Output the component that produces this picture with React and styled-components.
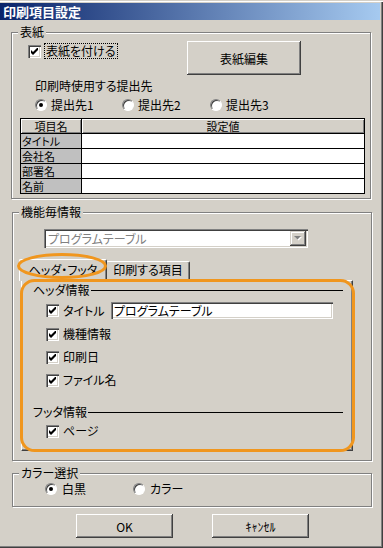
import React from "react";
import styled, { createGlobalStyle } from "styled-components";

const face = "#D4D0C8";

const GlobalStyle = createGlobalStyle`
  html, body { margin: 0; padding: 0; background: ${face}; }
  body {
    font-family: "Noto Sans CJK JP", "Noto Sans", sans-serif;
    font-size: 12px;
    color: #000;
    font-feature-settings: "palt";
  }
  * { box-sizing: border-box; }
`;

const Window = styled.div`
  position: relative;
  width: 383px;
  height: 548px;
  background: ${face};
  padding: 3px 3px 0 0;
  display: flex;
  flex-direction: column;
  box-shadow: inset 0 1px ${face}, inset 0 2px #fff, inset -1px -1px #404040, inset -2px -2px #808080;
`;

const TitleBar = styled.div`
  height: 17px;
  line-height: 17px;
  padding-left: 3px;
  font-size: 13px;
  font-weight: bold;
  color: #fff;
  background: linear-gradient(to right, #0a246a, #a6caf0);
`;

const Group = styled.div`
  position: relative;
  margin: ${(p) => p.$top}px 0 0 ${(p) => p.$left}px;
  width: 360px;
  height: ${(p) => p.$h}px;
  border: 1px solid #808080;
  box-shadow: 1px 1px 0 #fff, inset 1px 1px 0 #fff;
`;

const Caption = styled.span`
  position: absolute;
  top: -8px;
  left: 6px;
  padding: 0 2px;
  line-height: 14px;
  background: ${face};
`;

const CoverTop = styled.div`
  display: flex;
  align-items: flex-start;
  margin-top: 8px;
  padding-left: 16px;
`;

const CheckItem = styled.label`
  display: flex;
  align-items: center;
  gap: 3px;
  margin-top: 2px;
`;

const FocusText = styled.span`
  height: 16px;
  line-height: 14px;
  padding: 0 1px;
  border: 1px dotted #000;
`;

const BoxFrame = styled.span`
  width: 13px;
  height: 13px;
  flex-shrink: 0;
  background: #fff;
  display: flex;
  align-items: center;
  justify-content: center;
  box-shadow: inset 1px 1px #808080, inset 2px 2px #404040, inset -1px -1px #fff, inset -2px -2px ${face};
`;

const CheckBox = ({ checked }) => (
  <BoxFrame>
    {checked && (
      <svg width="7" height="7" viewBox="0 0 7 7">
        <path d="M0 2 L2 4 L6 0 L7 0 L7 2 L2 7 L0 5 Z" fill="#000" />
      </svg>
    )}
  </BoxFrame>
);

const PushButton = styled.button`
  width: ${(p) => p.$w}px;
  height: ${(p) => p.$h}px;
  margin-left: ${(p) => (p.$auto ? "auto" : "0")};
  margin-right: ${(p) => p.$mr || 0}px;
  padding: 0;
  border: none;
  background: ${face};
  font: inherit;
  font-feature-settings: normal;
  color: #000;
  box-shadow: inset -1px -1px #404040, inset 1px 1px #fff, inset -2px -2px #808080, inset 2px 2px ${face};
`;

const Note = styled.div`
  margin-top: 4px;
  padding-left: 23px;
  line-height: 14px;
`;

const RadioRow = styled.div`
  display: grid;
  grid-template-columns: ${(p) => p.$cols};
  margin-top: ${(p) => p.$mt}px;
  padding-left: ${(p) => p.$pl}px;
  height: 14px;
`;

const RadioItem = styled.label`
  display: flex;
  align-items: center;
  gap: ${(p) => p.$gap || 4}px;
  line-height: 14px;
`;

const RadioDot = styled.span`
  position: relative;
  width: 12px;
  height: 12px;
  flex-shrink: 0;
  border-radius: 50%;
  background: #fff;
  border: 1px solid;
  border-color: #808080 #fff #fff #808080;
  box-shadow: inset 1px 1px #404040;
  &::after {
    content: "";
    display: ${(p) => (p.$on ? "block" : "none")};
    position: absolute;
    left: 3px;
    top: 3px;
    width: 4px;
    height: 4px;
    border-radius: 50%;
    background: #000;
  }
`;

const Grid = styled.table`
  margin: 6px 0 0 8px;
  width: 345px;
  border-collapse: collapse;
  table-layout: fixed;
  font-size: 11px;
  th, td {
    border: 1px solid #000;
    height: 14px;
    padding: 0;
    line-height: 14px;
    font-weight: normal;
    white-space: nowrap;
    overflow: hidden;
  }
`;

const HeadCell = styled.th`
  background: ${face};
  text-align: center;
  box-shadow: inset 1px 1px #fff, inset -1px -1px #808080;
`;

const RowHead = styled.td`
  background: #c0c0c0;
  text-align: left;
  padding-left: 1px !important;
`;

const ValueCell = styled.td`
  background: #fff;
`;

const NameCol = styled.col`
  width: 61px;
`;

const Combo = styled.div`
  display: flex;
  align-items: center;
  justify-content: space-between;
  margin: 16px 0 0 31px;
  width: 264px;
  height: 19px;
  padding: 2px;
  background: #fff;
  box-shadow: inset 1px 1px #808080, inset 2px 2px #404040, inset -1px -1px #fff, inset -2px -2px ${face};
`;

const ComboText = styled.span`
  padding-left: 2px;
  line-height: 15px;
  color: #808080;
`;

const DropButton = styled.span`
  width: 16px;
  height: 15px;
  display: flex;
  align-items: center;
  justify-content: center;
  background: ${face};
  box-shadow: inset -1px -1px #404040, inset 1px 1px ${face}, inset -2px -2px #808080, inset 2px 2px #fff;
`;

const TabStrip = styled.div`
  display: flex;
  align-items: flex-end;
  height: 22px;
  margin: 11px 0 0 6px;
`;

const Tab = styled.div`
  position: relative;
  z-index: ${(p) => (p.$active ? 2 : 0)};
  width: ${(p) => p.$w}px;
  height: ${(p) => (p.$active ? 22 : 19)}px;
  margin-bottom: ${(p) => (p.$active ? 0 : 1)}px;
  margin-left: ${(p) => (p.$active ? 0 : -1)}px;
  padding-top: ${(p) => (p.$active ? 3 : 1)}px;
  text-align: center;
  line-height: 14px;
  background: ${face};
  border-top: 1px solid #fff;
  border-left: 1px solid #fff;
  border-right: 1px solid #404040;
  border-radius: 2px 2px 0 0;
  box-shadow: inset -1px 0 #808080;
`;

const Panel = styled.div`
  position: relative;
  z-index: 1;
  margin: -1px 0 0 8px;
  width: 332px;
  height: 171px;
  padding: 2px 9px 0 11px;
  background: ${face};
  border-top: 1px solid #fff;
  border-left: 1px solid #fff;
  border-right: 1px solid #404040;
  border-bottom: 1px solid #404040;
  box-shadow: inset -1px -1px #808080;
`;

const SectionHead = styled.div`
  display: flex;
  align-items: center;
  gap: 1px;
  margin-top: ${(p) => p.$mt || 0}px;
  line-height: 14px;
  &::after {
    content: "";
    flex: 1;
    height: 1px;
    background: #000;
  }
`;

const CheckList = styled.div`
  display: flex;
  flex-direction: column;
  gap: 7px;
  margin-top: ${(p) => p.$mt}px;
  padding-left: 13px;
`;

const CheckRow = styled.label`
  display: flex;
  align-items: center;
  gap: 4px;
  height: ${(p) => p.$h || 16}px;
  line-height: 14px;
`;

const RowLabel = styled.span`
  width: ${(p) => (p.$w ? `${p.$w}px` : "auto")};
`;

const TextField = styled.input`
  width: 222px;
  height: 17px;
  padding: 0 0 0 3px;
  border: none;
  outline: none;
  font: inherit;
  color: #000;
  background: #fff;
  box-shadow: inset 1px 1px #808080, inset 2px 2px #404040, inset -1px -1px #fff, inset -2px -2px ${face};
`;

const ButtonRow = styled.div`
  display: flex;
  gap: 39px;
  margin-top: 7px;
  padding-left: 76px;
`;

const Markup = styled.svg`
  position: absolute;
  left: 0;
  top: 0;
  z-index: 5;
  pointer-events: none;
`;

const coverRows = ["タイトル", "会社名", "部署名", "名前"];
const headerItems = ["機種情報", "印刷日", "ファイル名"];

export default function App() {
  return (
    <>
      <GlobalStyle />
      <Window>
        <TitleBar>印刷項目設定</TitleBar>

        <Group $top={12} $left={11} $h={167}>
          <Caption>表紙</Caption>
          <CoverTop>
            <CheckItem>
              <CheckBox checked />
              <FocusText>表紙を付ける</FocusText>
            </CheckItem>
            <PushButton $w={114} $h={34} $auto $mr={69}>
              表紙編集
            </PushButton>
          </CoverTop>
          <Note>印刷時使用する提出先</Note>
          <RadioRow $cols="87px 88px auto" $pl={23} $mt={5}>
            <RadioItem>
              <RadioDot $on />
              提出先1
            </RadioItem>
            <RadioItem>
              <RadioDot />
              提出先2
            </RadioItem>
            <RadioItem>
              <RadioDot />
              提出先3
            </RadioItem>
          </RadioRow>
          <Grid>
            <colgroup>
              <NameCol />
              <col />
            </colgroup>
            <thead>
              <tr>
                <HeadCell>項目名</HeadCell>
                <HeadCell>設定値</HeadCell>
              </tr>
            </thead>
            <tbody>
              {coverRows.map((r) => (
                <tr key={r}>
                  <RowHead>{r}</RowHead>
                  <ValueCell />
                </tr>
              ))}
            </tbody>
          </Grid>
        </Group>

        <Group $top={13} $left={12} $h={249}>
          <Caption>機能毎情報</Caption>
          <Combo>
            <ComboText>プログラムテーブル</ComboText>
            <DropButton>
              <svg width="8" height="5" viewBox="0 0 8 5">
                <path d="M1 1 H8 L4.5 4.5 Z" fill="#fff" />
                <path d="M0 0 H7 L3.5 3.5 Z" fill="#808080" />
              </svg>
            </DropButton>
          </Combo>
          <TabStrip>
            <Tab $active $w={88}>ヘッダ・フッタ</Tab>
            <Tab $w={84}>印刷する項目</Tab>
          </TabStrip>
          <Panel>
            <SectionHead>ヘッダ情報</SectionHead>
            <CheckList $mt={5}>
              <CheckRow $h={17}>
                <CheckBox checked />
                <RowLabel $w={44}>タイトル</RowLabel>
                <TextField readOnly defaultValue="プログラムテーブル" />
              </CheckRow>
              {headerItems.map((t) => (
                <CheckRow key={t}>
                  <CheckBox checked />
                  <RowLabel>{t}</RowLabel>
                </CheckRow>
              ))}
            </CheckList>
            <SectionHead $mt={17}>フッタ情報</SectionHead>
            <CheckList $mt={4}>
              <CheckRow>
                <CheckBox checked />
                <RowLabel>ページ</RowLabel>
              </CheckRow>
            </CheckList>
          </Panel>
        </Group>

        <Group $top={12} $left={12} $h={34}>
          <Caption>カラー選択</Caption>
          <RadioRow $cols="88px auto" $pl={32} $mt={8}>
            <RadioItem $gap={5}>
              <RadioDot $on />
              白黒
            </RadioItem>
            <RadioItem $gap={5}>
              <RadioDot />
              カラー
            </RadioItem>
          </RadioRow>
        </Group>

        <ButtonRow>
          <PushButton $w={97} $h={24}>OK</PushButton>
          <PushButton $w={97} $h={24}>ｷｬﾝｾﾙ</PushButton>
        </ButtonRow>

        <Markup width="383" height="548" viewBox="0 0 383 548">
          <ellipse cx="62" cy="266" rx="43.5" ry="11.5" fill="none" stroke="#f0961e" strokeWidth="3" />
          <rect x="21.5" y="280.5" width="332" height="170" rx="13" fill="none" stroke="#f0961e" strokeWidth="3" />
        </Markup>
      </Window>
    </>
  );
}
